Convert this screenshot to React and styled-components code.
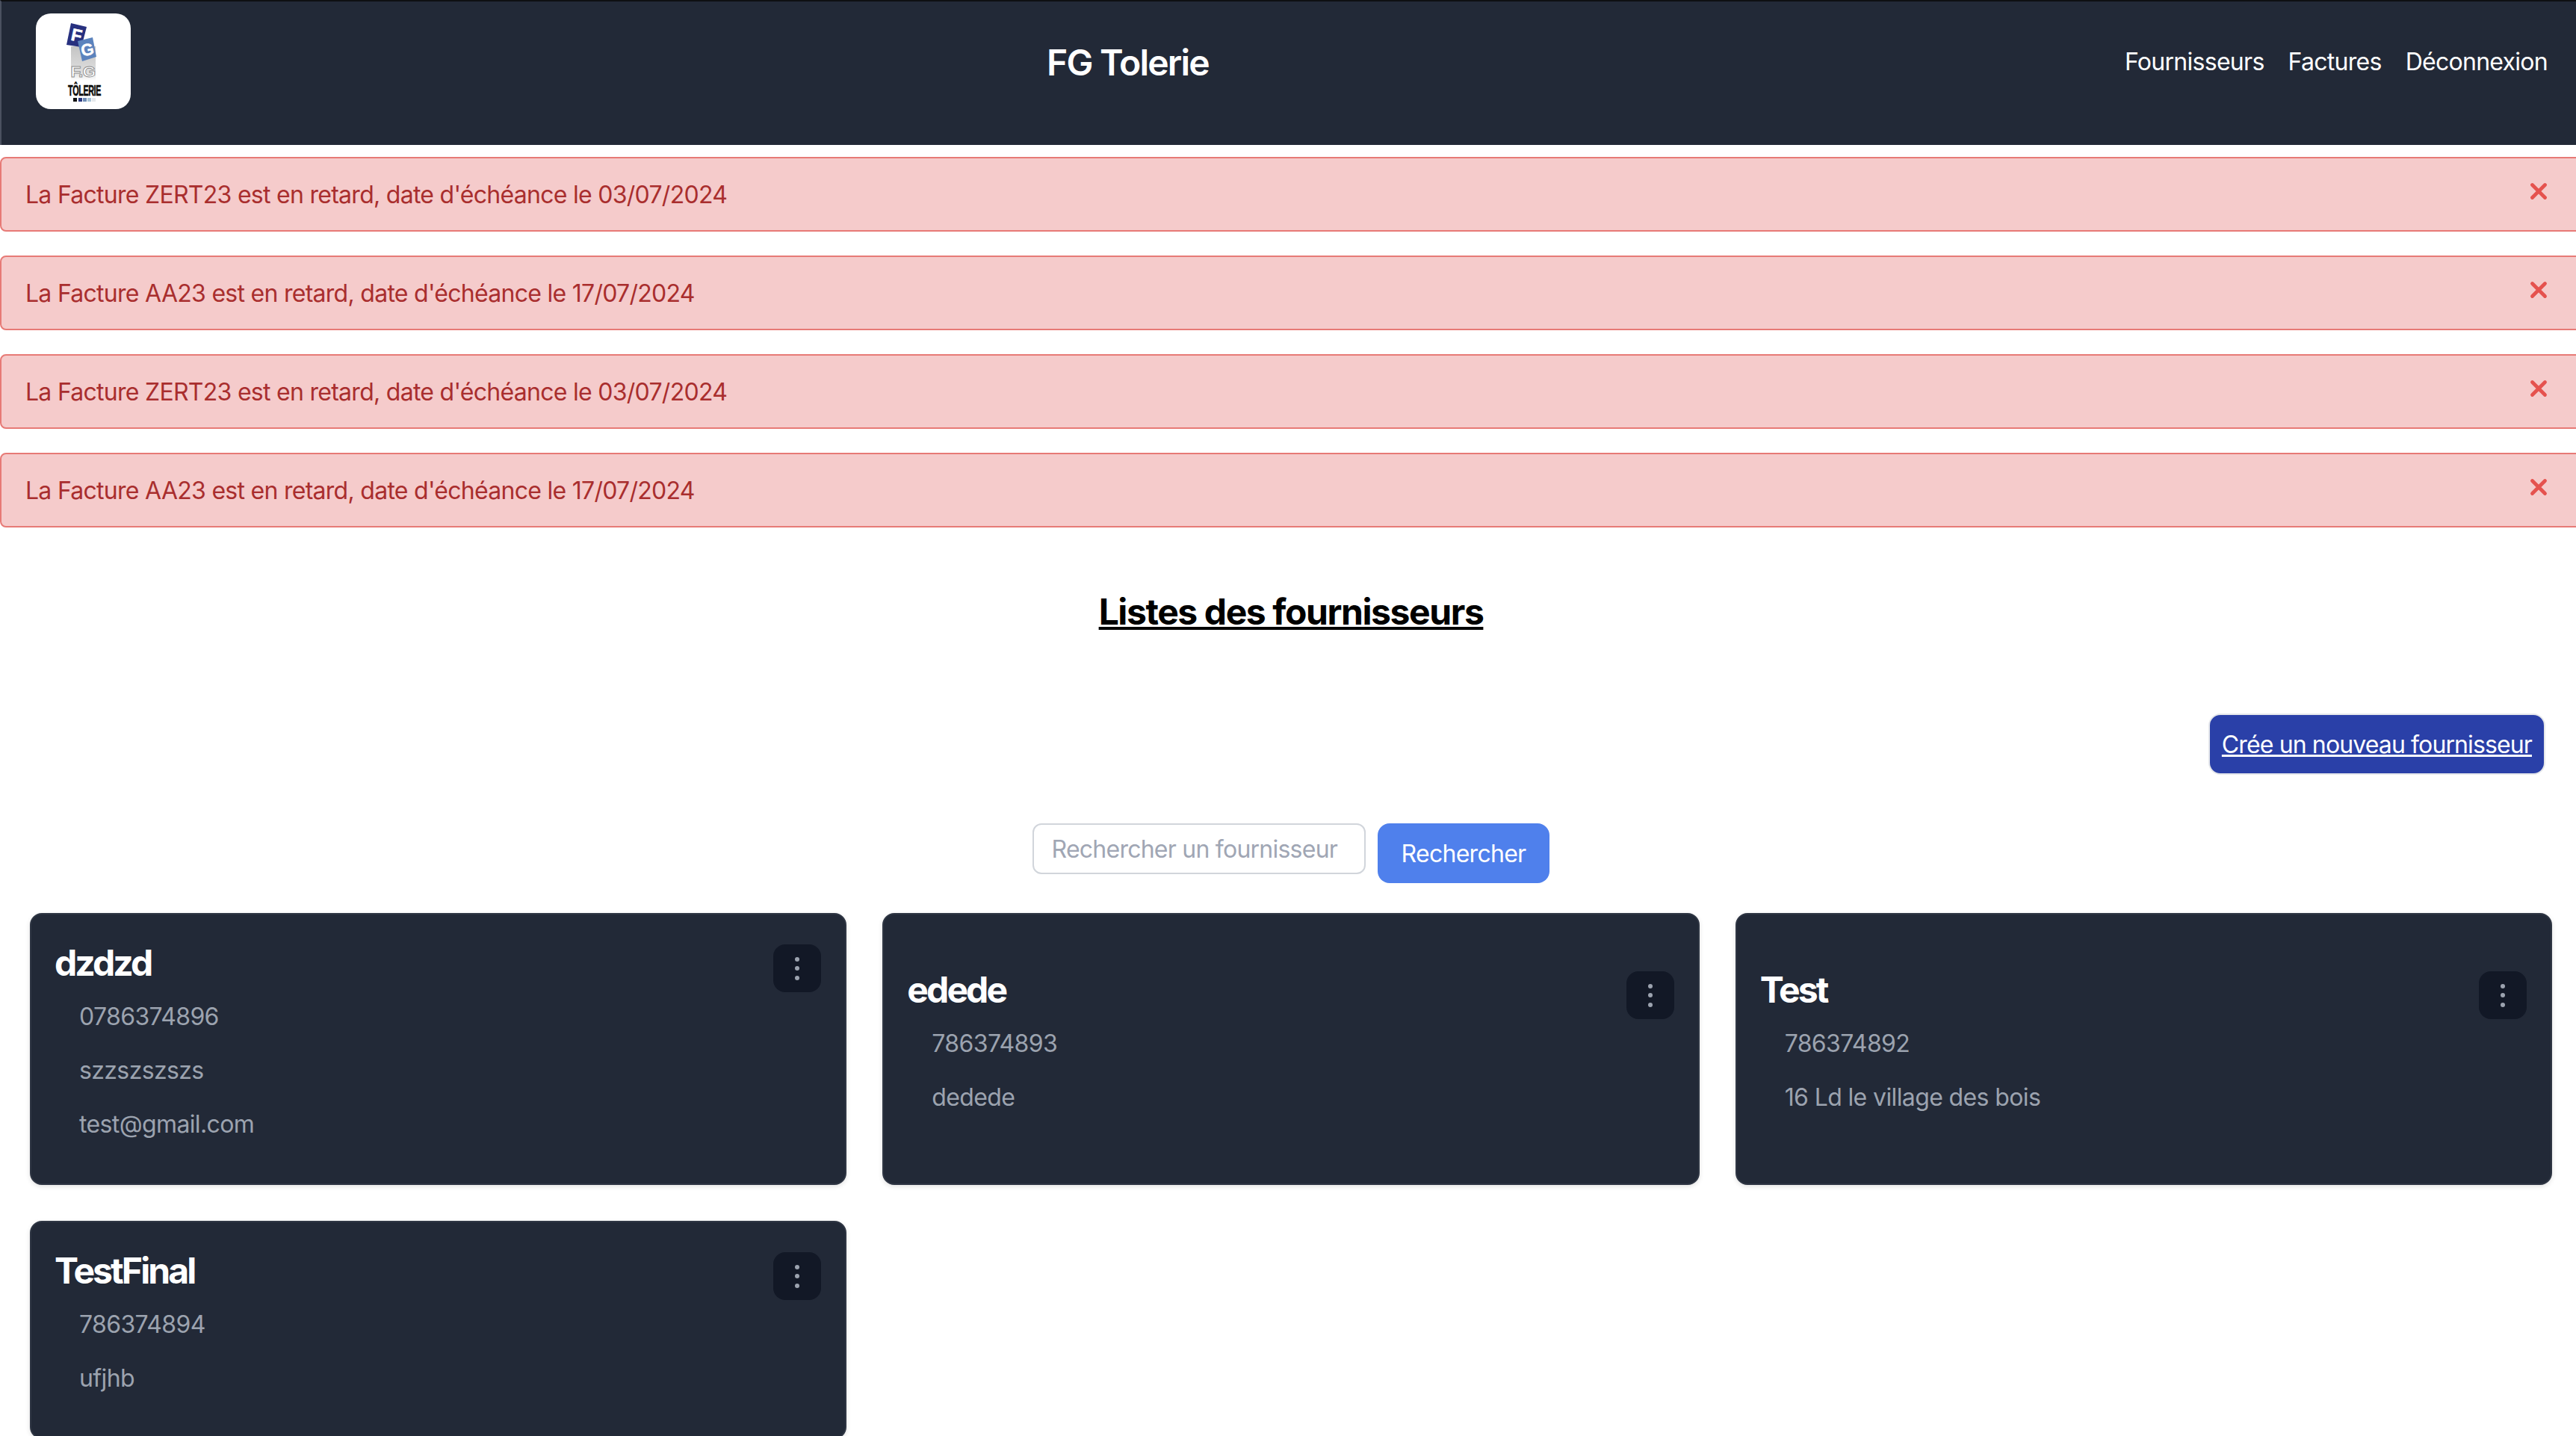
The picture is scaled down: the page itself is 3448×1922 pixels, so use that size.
import React from 'react'
import styled, { createGlobalStyle } from 'styled-components'

const alerts = [
  { id: 1, code: 'ZERT23', date: '03/07/2024' },
  { id: 2, code: 'AA23', date: '17/07/2024' },
  { id: 3, code: 'ZERT23', date: '03/07/2024' },
  { id: 4, code: 'AA23', date: '17/07/2024' },
]

const suppliers = [
  { id: 1, name: 'dzdzd', lines: ['0786374896', 'szzszszszs', 'test@gmail.com'] },
  { id: 2, name: 'edede', lines: ['786374893', 'dedede'] },
  { id: 3, name: 'Test', lines: ['786374892', '16 Ld le village des bois'] },
  { id: 4, name: 'TestFinal', lines: ['786374894', 'ufjhb'] },
]

function Logo() {
  return (
    <svg width="127" height="128" viewBox="0 0 127 128">
      <defs>
        <linearGradient id="fade" x1="0" y1="0" x2="0" y2="1">
          <stop offset="0" stopColor="#c4c4c4" />
          <stop offset="0.75" stopColor="#dedede" />
          <stop offset="1" stopColor="#ffffff" />
        </linearGradient>
      </defs>
      <rect x="47" y="44" width="33" height="46" fill="url(#fade)" />
      <polygon points="47,13 68,18 61,45 41,42" fill="#27307f" />
      <text x="54" y="37" fontFamily="'Liberation Sans', sans-serif" fontWeight="700" fontSize="23" fill="#fff" stroke="#fff" strokeWidth="0.6" transform="rotate(12 54 30)" textAnchor="middle">F</text>
      <polygon points="56,37 76,32 81,58 62,64" fill="#5b83bd" />
      <text x="68.5" y="56" fontFamily="'Liberation Sans', sans-serif" fontWeight="700" fontSize="22" fill="#fff" stroke="#fff" strokeWidth="0.5" transform="rotate(-13 68.5 48)" textAnchor="middle">G</text>
      <text x="63" y="85" fontFamily="'Liberation Sans', sans-serif" fontWeight="700" fontSize="21" fill="#fff" stroke="#8f8f8f" strokeWidth="0.9" textAnchor="middle" textLength="33" lengthAdjust="spacingAndGlyphs">F.G</text>
      <text x="65" y="110" fontFamily="'Liberation Sans', sans-serif" fontWeight="700" fontSize="21" fill="#0b0b0b" stroke="#0b0b0b" strokeWidth="0.6" textAnchor="middle" textLength="44" lengthAdjust="spacingAndGlyphs">TÔLERIE</text>
      <rect x="50" y="113" width="5" height="5" fill="#111" />
      <rect x="57" y="113" width="5" height="5" fill="#2b3a80" />
      <rect x="63" y="113" width="5" height="5" fill="#6f8db5" />
      <rect x="69" y="113" width="5" height="5" fill="#a9c4d8" />
      <rect x="75" y="113" width="5" height="5" fill="#e5e9ec" />
    </svg>
  )
}

function CloseIcon() {
  return (
    <CloseSvg viewBox="0 0 48 48">
      <path d="M15.5 15.5 L32.5 32.5 M32.5 15.5 L15.5 32.5" />
    </CloseSvg>
  )
}

function App() {
  return (
    <>
      <GlobalStyle />
      <Page>
        <Navbar>
          <LogoBox>
            <Logo />
          </LogoBox>
          <Brand>FG Tolerie</Brand>
          <NavLinks>
            <NavLink>Fournisseurs</NavLink>
            <NavLink>Factures</NavLink>
            <NavLink>Déconnexion</NavLink>
          </NavLinks>
        </Navbar>

        <AlertList>
          {alerts.map((a) => (
            <Alert key={a.id}>
              <span>La Facture {a.code} est en retard, date d'échéance le {a.date}</span>
              <CloseIcon />
            </Alert>
          ))}
        </AlertList>

        <Main>
          <Heading>Listes des fournisseurs</Heading>
          <CreateRow>
            <CreateButton>Crée un nouveau fournisseur</CreateButton>
          </CreateRow>
          <SearchRow>
            <SearchInput placeholder="Rechercher un fournisseur" />
            <SearchButton>Rechercher</SearchButton>
          </SearchRow>
          <CardGrid>
            {suppliers.map((s) => (
              <Card key={s.id}>
                <CardHeader>
                  <CardTitle>{s.name}</CardTitle>
                  <MenuButton>
                    <Dot />
                    <Dot />
                    <Dot />
                  </MenuButton>
                </CardHeader>
                {s.lines.map((line) => (
                  <CardLine key={line}>{line}</CardLine>
                ))}
              </Card>
            ))}
          </CardGrid>
        </Main>
      </Page>
    </>
  )
}

const GlobalStyle = createGlobalStyle`
  html, body {
    margin: 0;
    overflow: hidden;
    background: #fff;
  }
  * {
    box-sizing: border-box;
  }
  body {
    font-family: Inter, "Liberation Sans", sans-serif;
    font-size: 32px;
    line-height: 48px;
    letter-spacing: -0.72px;
  }
`

const Page = styled.div`
  width: 3456px;
`

const Navbar = styled.nav`
  display: flex;
  align-items: center;
  justify-content: space-between;
  height: 194px;
  padding: 16px 46px 48px;
  background: #222937;
  border-top: 2px solid #0e0f12;
  border-left: 2px solid #4b5160;
`

const LogoBox = styled.div`
  width: 127px;
  height: 128px;
  background: #fff;
  border-radius: 20px;
  svg {
    display: block;
  }
`

const Brand = styled.div`
  padding-top: 3px;
  color: #fff;
  font-size: 48px;
  line-height: 64px;
  font-weight: 600;
  letter-spacing: -1.8px;
`

const NavLinks = styled.div`
  display: flex;
  gap: 32px;
  padding-top: 2px;
`

const NavLink = styled.a`
  color: #fff;
  font-size: 32px;
`

const AlertList = styled.div`
  display: flex;
  flex-direction: column;
  gap: 32px;
  margin-top: 16px;
`

const Alert = styled.div`
  display: flex;
  justify-content: space-between;
  height: 100px;
  padding: 25px 32px 23px;
  background: #f5cbcb;
  border: 2px solid #e77a76;
  border-radius: 8px;
  color: #a92e2e;
`

const CloseSvg = styled.svg`
  width: 48px;
  height: 48px;
  margin-top: -5px;
  fill: none;
  stroke: #e5524e;
  stroke-width: 4.8;
  stroke-linecap: round;
`

const Main = styled.main`
  padding: 0 40px;
`

const Heading = styled.h1`
  margin: 81px 0 0;
  text-align: center;
  font-size: 48px;
  line-height: 64px;
  font-weight: 700;
  letter-spacing: -1.4px;
  color: #000;
  text-decoration: underline;
`

const CreateRow = styled.div`
  display: flex;
  justify-content: flex-end;
  margin-top: 104px;
  padding-right: 9px;
`

const CreateButton = styled.a`
  padding: 16px;
  height: 82px;
  background: #2a40a8;
  border: 2px solid #e5e7eb;
  border-radius: 16px;
  color: #fff;
  letter-spacing: -0.88px;
  text-decoration: underline;
`

const SearchRow = styled.div`
  display: flex;
  justify-content: center;
  align-items: flex-start;
  gap: 16px;
  margin-top: 65px;
`

const SearchInput = styled.input`
  width: 446px;
  height: 68px;
  padding: 8px 24px;
  background: #fff;
  border: 2px solid #d1d5db;
  border-radius: 12px;
  font-family: inherit;
  font-size: 32px;
  line-height: 48px;
  letter-spacing: -0.76px;
  color: #111827;
  &::placeholder {
    color: #a0a6b4;
  }
`

const SearchButton = styled.button`
  height: 80px;
  padding: 0 32px;
  background: #4f80ec;
  border: none;
  border-radius: 16px;
  color: #fff;
  font-family: inherit;
  font-size: 32px;
  letter-spacing: -0.72px;
`

const CardGrid = styled.div`
  display: grid;
  grid-template-columns: repeat(3, 1fr);
  gap: 48px;
  margin-top: 40px;
`

const Card = styled.div`
  display: flex;
  flex-direction: column;
  justify-content: center;
  padding: 32px;
  background: #222937;
  border: 2px solid #2f3644;
  border-radius: 16px;
  box-shadow: 0 2px 6px rgba(0, 0, 0, 0.12);
`

const CardHeader = styled.div`
  display: flex;
  justify-content: space-between;
  align-items: flex-start;
`

const CardTitle = styled.h5`
  margin: 0 0 16px;
  padding-top: 2px;
  margin-left: -1px;
  font-size: 48px;
  line-height: 62px;
  font-weight: 700;
  letter-spacing: -2.9px;
  color: #fff;
`

const MenuButton = styled.button`
  display: flex;
  flex-direction: column;
  align-items: center;
  justify-content: center;
  gap: 6.5px;
  width: 64px;
  height: 64px;
  margin-top: 8px;
  padding: 0;
  background: #121826;
  border: none;
  border-radius: 16px;
`

const Dot = styled.span`
  width: 6px;
  height: 6px;
  border-radius: 50%;
  background: #9ca3af;
`

const CardLine = styled.p`
  margin: 0 0 23px;
  padding: 1px 0 0 32px;
  letter-spacing: -0.62px;
  color: #9ca3af;
`

export default App
